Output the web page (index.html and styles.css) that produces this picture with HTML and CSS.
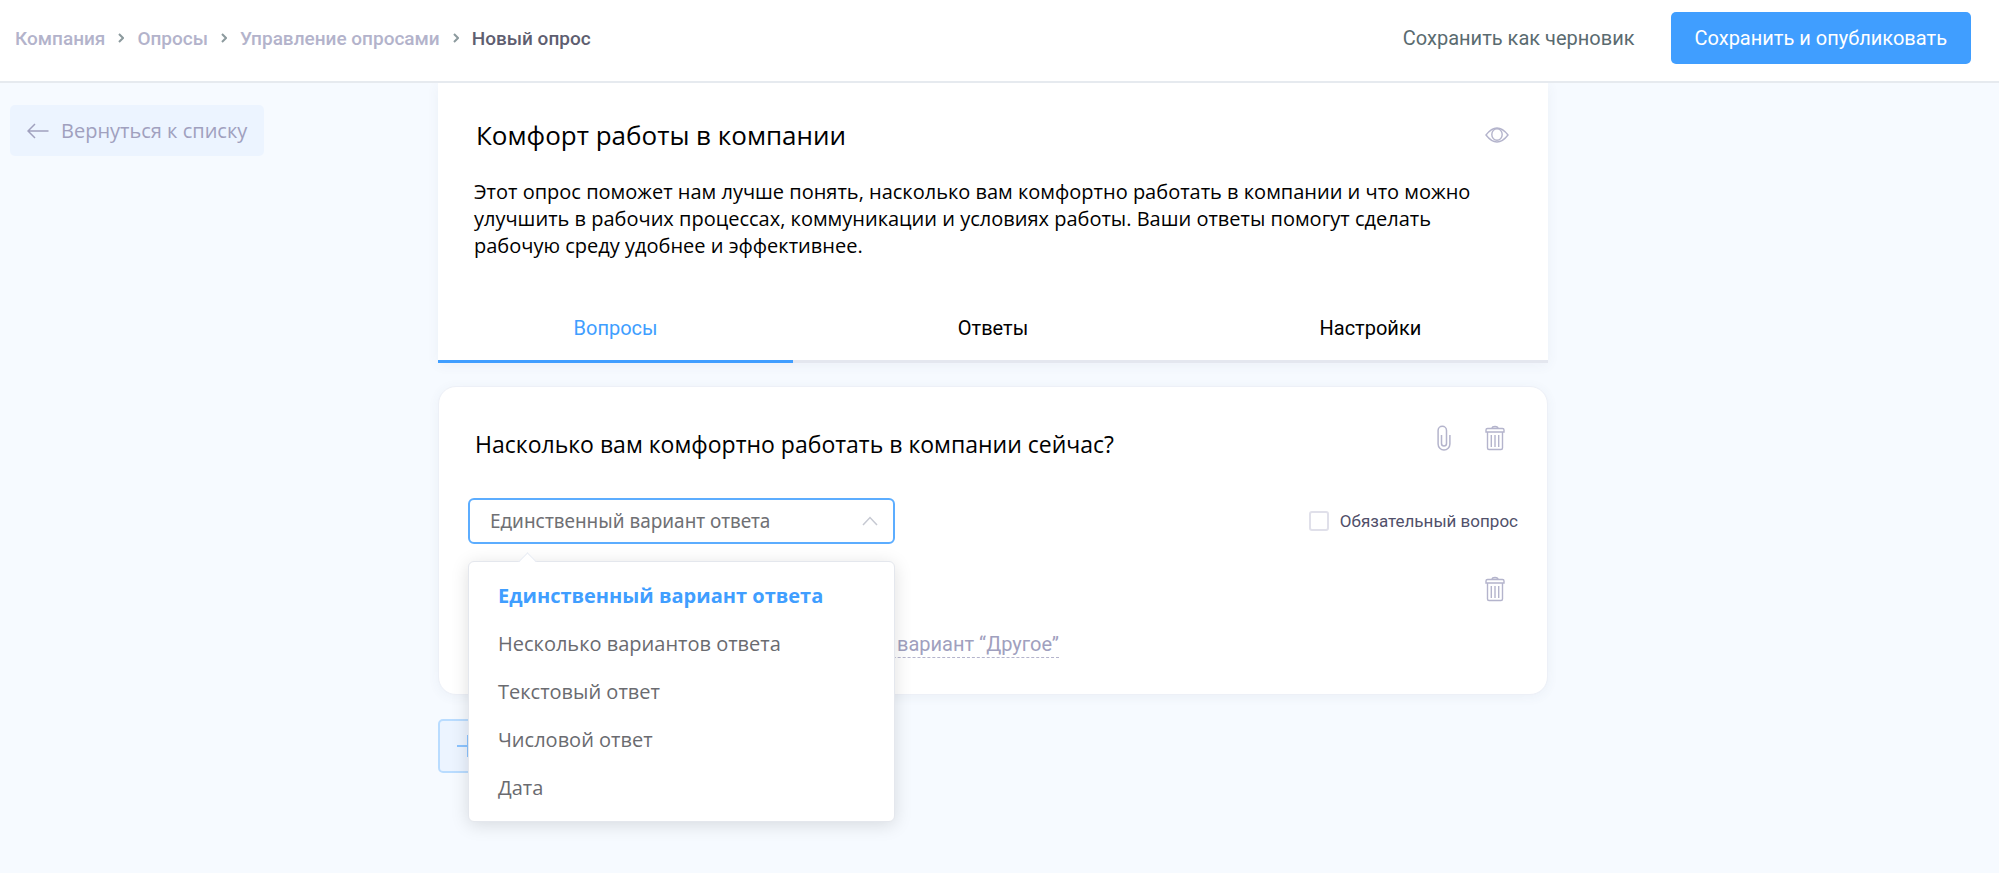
FILE: index.html
```html
<!DOCTYPE html>
<html lang="ru">
<head>
    <meta charset="UTF-8">
    <meta name="viewport" content="width=device-width, initial-scale=1.0">
    <title>Новый опрос</title>
    <link rel="stylesheet" href="styles.css">
</head>
<body>
    <!-- Header -->
    <header class="header">
        <nav class="breadcrumbs">
            <a href="#">Компания</a>
            <svg class="sep" viewBox="0 0 6 10"><path d="M1 1l4 4-4 4"/></svg>
            <a href="#">Опросы</a>
            <svg class="sep" viewBox="0 0 6 10"><path d="M1 1l4 4-4 4"/></svg>
            <a href="#">Управление опросами</a>
            <svg class="sep" viewBox="0 0 6 10"><path d="M1 1l4 4-4 4"/></svg>
            <span class="current">Новый опрос</span>
        </nav>
        <div class="actions">
            <button type="button" class="btn-draft">Сохранить как черновик</button>
            <button type="button" class="btn-publish">Сохранить и опубликовать</button>
        </div>
    </header>

    <main class="layout">
        <aside class="side">
            <a href="#" class="back">
                <svg class="back-icon" viewBox="0 0 22 16" stroke-width="1.500"><path d="M21.500 8H1M8 1L1 8l7 7"/></svg>
                Вернуться к списку
            </a>
        </aside>

        <div class="content">
            <!-- Survey info -->
            <section class="panel">
                <div class="panel-top">
                    <h1>Комфорт работы в компании</h1>
                    <button type="button" class="icon-btn" aria-label="Просмотр">
                        <svg class="icon-eye" viewBox="0 0 24 16" stroke-width="1.400"><path d="M1 8C5 2.800 8.500 1 12 1s7 1.800 11 7c-4 5.200-7.500 7-11 7S5 13.200 1 8z"/><ellipse cx="12" cy="7.500" rx="5.200" ry="5.800"/></svg>
                    </button>
                </div>
                <p class="description">Этот опрос поможет нам лучше понять, насколько вам комфортно работать в компании и что можно улучшить в рабочих процессах, коммуникации и условиях работы. Ваши ответы помогут сделать рабочую среду удобнее и эффективнее.</p>
                <div class="tabs">
                    <button type="button" class="tab active">Вопросы</button>
                    <button type="button" class="tab">Ответы</button>
                    <button type="button" class="tab">Настройки</button>
                </div>
            </section>

            <!-- Question -->
            <section class="card">
                <div class="card-top">
                    <h2 id="question">Насколько вам комфортно работать в компании сейчас?</h2>
                    <div class="icons">
                        <button type="button" class="icon-btn" aria-label="Прикрепить">
                            <svg class="icon-clip" viewBox="0 0 14 26" stroke-width="1.500"><path d="M4.500 10v8.500a2.500 2.500 0 0 0 5 0V5.500a4.200 4.200 0 0 0-8.400 0v13.500a5.900 5.900 0 0 0 11.800 0V10"/></svg>
                        </button>
                        <button type="button" class="icon-btn" aria-label="Удалить">
                            <svg class="icon-trash" viewBox="0 0 20 26" stroke-width="1.400"><path d="M7 3.500C7 2 8 1.500 10 1.500s3 .5 3 2M2.500 3.500h15a1.500 1.500 0 0 1 1.500 1.500v2H1V5a1.500 1.500 0 0 1 1.500-1.500zM2.500 7v16a1.500 1.500 0 0 0 1.500 1.500h12a1.500 1.500 0 0 0 1.500-1.500V7M6.300 10v12M10 10v12M13.700 10v12"/></svg>
                        </button>
                    </div>
                </div>

                <div class="card-row">
                    <div class="field">
                        <select class="select" aria-labelledby="question">
                            <option>Единственный вариант ответа</option>
                        </select>
                        <svg class="chevron" viewBox="0 0 16 10" stroke-width="1.500"><path d="M1 9l7-7.500L15 9"/></svg>
                        <ul class="menu">
                            <li><button type="button" class="selected">Единственный вариант ответа</button></li>
                            <li><button type="button">Несколько вариантов ответа</button></li>
                            <li><button type="button">Текстовый ответ</button></li>
                            <li><button type="button">Числовой ответ</button></li>
                            <li><button type="button">Дата</button></li>
                        </ul>
                    </div>
                    <label class="required">
                        <input type="checkbox">
                        Обязательный вопрос
                    </label>
                </div>

                <div class="answer">
                    <button type="button" class="icon-btn" aria-label="Удалить">
                        <svg class="icon-trash" viewBox="0 0 20 26" stroke-width="1.400"><path d="M7 3.500C7 2 8 1.500 10 1.500s3 .5 3 2M2.500 3.500h15a1.500 1.500 0 0 1 1.500 1.500v2H1V5a1.500 1.500 0 0 1 1.500-1.500zM2.500 7v16a1.500 1.500 0 0 0 1.500 1.500h12a1.500 1.500 0 0 0 1.500-1.500V7M6.300 10v12M10 10v12M13.700 10v12"/></svg>
                    </button>
                </div>
                <div class="other">
                    <a href="#">вариант “Другое”</a>
                </div>
            </section>

            <button type="button" class="add" aria-label="Добавить">
                <svg class="icon-plus" viewBox="0 0 22 22" stroke-width="2"><path d="M0 11h22M11 0v22"/></svg>
            </button>
        </div>
    </main>
</body>
</html>
```

FILE: styles.css
```css
* {
    box-sizing: border-box;
}
body {
    margin: 0;
    min-height: 100vh;
    background: #f6faff;
    color: #000;
    font-family: "Open Sans", "Noto Sans", sans-serif;
    font-size: 20px;
}
button {
    font: inherit;
    color: inherit;
    background: none;
    border: none;
    padding: 0;
    cursor: pointer;
}
a {
    text-decoration: none;
    color: inherit;
}
h1, h2, p, ul {
    margin: 0;
    padding: 0;
    font-weight: 400;
}
svg {
    display: block;
    fill: none;
    stroke: currentColor;
}

/* Header */
.header {
    display: flex;
    justify-content: space-between;
    align-items: center;
    padding: 12px 28px 17px 15px;
    background: #fff;
    border-bottom: 2px solid #e6eaef;
    font-family: Roboto, sans-serif;
}
.breadcrumbs {
    display: flex;
    align-items: center;
    gap: 13px;
    font-size: 19px;
    font-weight: 500;
    color: #b3b3cb;
}
.breadcrumbs .current {
    color: #5e5e70;
}
.sep {
    width: 6px;
    height: 10px;
    color: #8c9a9e;
    stroke-width: 2;
}
.actions {
    display: flex;
    align-items: center;
    gap: 36px;
}
.btn-draft {
    color: #5a6b70;
}
.btn-publish {
    height: 52px;
    padding: 0 24px;
    border-radius: 5px;
    background: #409eff;
    color: #fff;
}

/* Layout */
.layout {
    display: grid;
    grid-template-columns: 1fr minmax(0, 1110px) 1fr;
    padding: 0 23px 24px 10px;
}
.side {
    padding-top: 22px;
}
.back {
    display: inline-flex;
    align-items: center;
    gap: 12px;
    height: 51px;
    padding: 0 17px;
    border-radius: 5px;
    background: #ecf4ff;
    color: #a0a0be;
}
.back-icon {
    width: 22px;
    height: 16px;
}

/* Survey info */
.panel {
    background: #fff;
    box-shadow: 0 2px 12px rgba(60, 80, 120, 0.06);
    clip-path: inset(0 -16px -16px);
}
.panel-top {
    display: flex;
    justify-content: space-between;
    padding: 32px 39px 0 38px;
}
h1 {
    font-size: 26px;
    line-height: 40px;
}
.icon-btn {
    color: #b4b4cc;
}
.icon-eye {
    width: 24px;
    height: 16px;
}
.description {
    padding: 23px 72px 0 36px;
    line-height: 27px;
}
.tabs {
    display: grid;
    grid-template-columns: 16fr 18fr 16fr;
    margin-top: 34px;
}
.tab {
    height: 70px;
    padding-top: 2px;
    border-bottom: 3px solid #e4e7ef;
    font-family: Roboto, sans-serif;
}
.tab.active {
    color: #409eff;
    border-color: #409eff;
}

/* Question */
.card {
    margin-top: 23px;
    padding: 38px 29px 36px;
    background: #fff;
    border: 1px solid #edf0f7;
    border-radius: 18px;
    box-shadow: 0 2px 12px rgba(60, 80, 120, 0.06);
}
.card-top {
    display: flex;
    justify-content: space-between;
    padding: 0 13px 0 7px;
}
h2 {
    font-size: 23px;
    line-height: 38px;
}
.icons {
    display: flex;
    align-items: flex-start;
    gap: 34px;
}
.icon-clip {
    width: 14px;
    height: 26px;
}
.icon-trash {
    width: 20px;
    height: 26px;
}
.card-row {
    display: flex;
    justify-content: space-between;
    align-items: center;
    margin-top: 35px;
}
.field {
    position: relative;
    width: 427px;
}
.select {
    display: block;
    width: 100%;
    height: 46px;
    padding: 0 20px;
    appearance: none;
    background: #fff;
    border: 2px solid #5cadff;
    border-radius: 6px;
    color: #6f7074;
    font-family: "Noto Sans", sans-serif;
    font-size: 19px;
}
.chevron {
    position: absolute;
    top: 18px;
    right: 17px;
    width: 16px;
    height: 10px;
    color: #c6c9d2;
    pointer-events: none;
}
.menu {
    position: absolute;
    z-index: 2;
    top: 63px;
    left: 0;
    right: 0;
    padding: 9px 0 10px;
    list-style: none;
    background: #fff;
    border: 1px solid #e4e7ed;
    border-radius: 6px;
    box-shadow: 0 3px 18px rgba(0, 0, 0, 0.13);
}
.menu::before {
    content: "";
    position: absolute;
    top: -7px;
    left: 52px;
    width: 12px;
    height: 12px;
    background: linear-gradient(135deg, #fff 50%, transparent 50%);
    border-top: 1px solid #ebeef5;
    border-left: 1px solid #ebeef5;
    transform: rotate(45deg);
}
.menu button {
    display: block;
    width: 100%;
    height: 48px;
    padding: 0 29px;
    text-align: left;
    color: #6a6b70;
}
.menu .selected {
    color: #409eff;
    font-weight: 700;
}
.required {
    display: flex;
    align-items: center;
    gap: 11px;
    font-family: Roboto, sans-serif;
    font-size: 17px;
    color: #50506a;
}
.required input {
    width: 20px;
    height: 20px;
    margin: 0;
    appearance: none;
    background: #fff;
    border: 2px solid #e0e0ea;
    border-radius: 3px;
}
.answer {
    display: flex;
    justify-content: flex-end;
    margin-top: 32px;
    padding-right: 13px;
}
.other {
    display: flex;
    margin-top: 29px;
    padding-left: 400px;
    font-family: Roboto, sans-serif;
    color: #a0a0be;
}
.other a {
    padding-left: 29px;
    line-height: 26px;
    border-bottom: 1px dashed #b4b4cc;
}

.add {
    display: flex;
    align-items: center;
    width: 300px;
    height: 54px;
    margin-top: 24px;
    padding-left: 17px;
    background: #ecf4ff;
    border: 2px solid #b9dcff;
    border-radius: 5px;
    color: #8cc4ff;
}
.icon-plus {
    width: 22px;
    height: 22px;
}
```
